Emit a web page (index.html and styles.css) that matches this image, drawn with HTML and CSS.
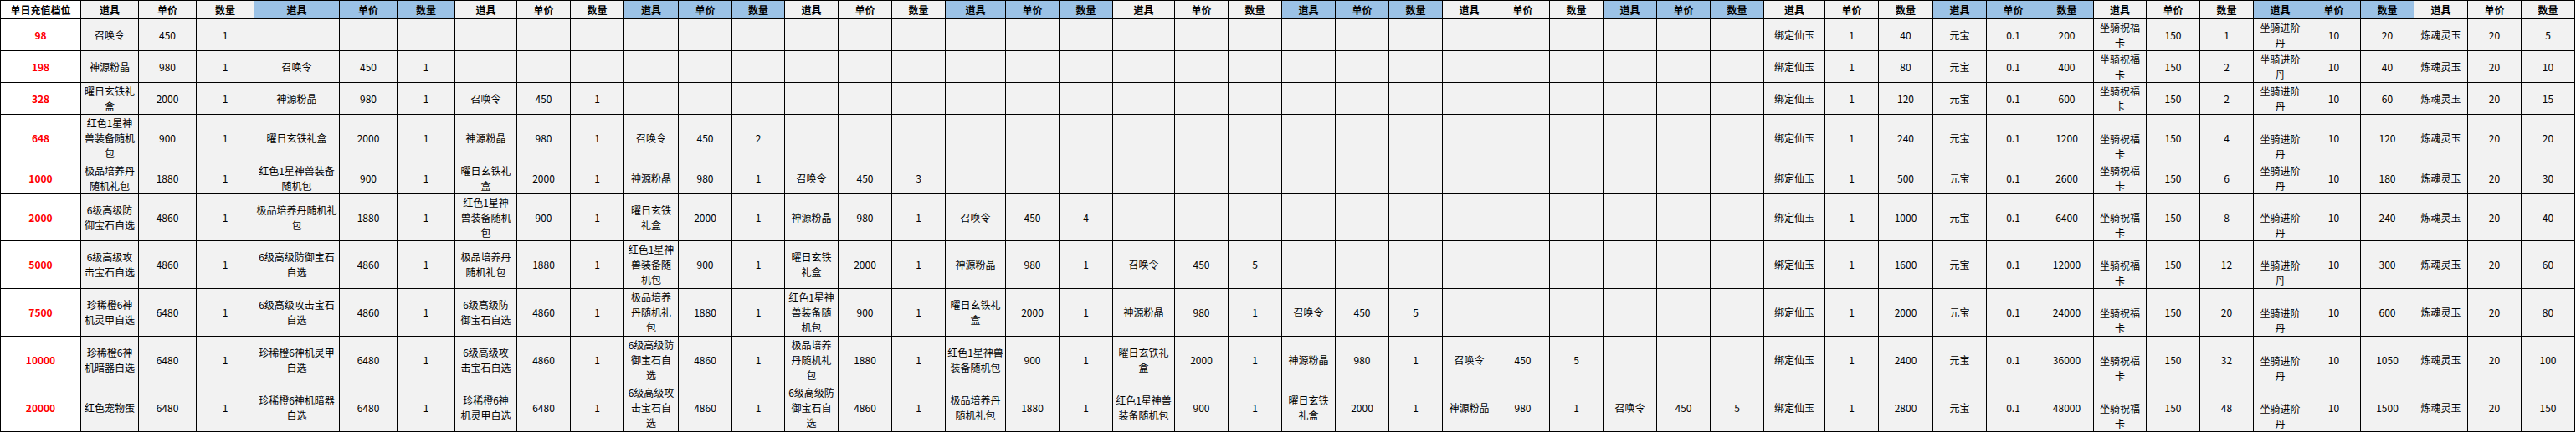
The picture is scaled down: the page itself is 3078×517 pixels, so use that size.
FILE: index.html
```html
<!DOCTYPE html>
<html lang="zh-CN">
<head>
<meta charset="utf-8">
<title>单日充值档位</title>
<link rel="stylesheet" href="styles.css">
</head>
<body>
<table class="sheet">
<colgroup>
<col class="c96">
<col class="c69"><col class="c69"><col class="c69">
<col class="c102"><col class="c69"><col class="c69">
<col class="c74"><col class="c64"><col class="c64">
<col class="c65"><col class="c64"><col class="c63">
<col class="c64"><col class="c64"><col class="c64">
<col class="c72"><col class="c64"><col class="c64">
<col class="c74"><col class="c64"><col class="c64">
<col class="c64"><col class="c64"><col class="c64">
<col class="c64"><col class="c64"><col class="c64">
<col class="c64"><col class="c64"><col class="c64">
<col class="c73"><col class="c64"><col class="c65">
<col class="c64"><col class="c64"><col class="c64">
<col class="c63"><col class="c64"><col class="c64">
<col class="c64"><col class="c64"><col class="c64">
<col class="c64"><col class="c64"><col class="c64">
</colgroup>
<thead>
<tr class="hd">
<th class="lv">单日充值档位</th>
<th>道具</th><th>单价</th><th>数量</th>
<th class="b">道具</th><th class="b">单价</th><th class="b">数量</th>
<th>道具</th><th>单价</th><th>数量</th>
<th class="b">道具</th><th class="b">单价</th><th class="b">数量</th>
<th>道具</th><th>单价</th><th>数量</th>
<th class="b">道具</th><th class="b">单价</th><th class="b">数量</th>
<th>道具</th><th>单价</th><th>数量</th>
<th class="b">道具</th><th class="b">单价</th><th class="b">数量</th>
<th>道具</th><th>单价</th><th>数量</th>
<th class="b">道具</th><th class="b">单价</th><th class="b">数量</th>
<th>道具</th><th>单价</th><th>数量</th>
<th class="b">道具</th><th class="b">单价</th><th class="b">数量</th>
<th>道具</th><th>单价</th><th>数量</th>
<th class="b">道具</th><th class="b">单价</th><th class="b">数量</th>
<th>道具</th><th>单价</th><th>数量</th>
</tr>
</thead>
<tbody>
<tr class="r2">
<td class="lv">98</td>
<td>召唤令</td><td>450</td><td>1</td>
<td></td><td></td><td></td>
<td></td><td></td><td></td>
<td></td><td></td><td></td>
<td></td><td></td><td></td>
<td></td><td></td><td></td>
<td></td><td></td><td></td>
<td></td><td></td><td></td>
<td></td><td></td><td></td>
<td></td><td></td><td></td>
<td>绑定仙玉</td><td>1</td><td>40</td>
<td>元宝</td><td>0.1</td><td>200</td>
<td class="bt">坐骑祝福<br>卡</td><td>150</td><td>1</td>
<td class="bt">坐骑进阶<br>丹</td><td>10</td><td>20</td>
<td>炼魂灵玉</td><td>20</td><td>5</td>
</tr>
<tr class="r2">
<td class="lv">198</td>
<td>神源粉晶</td><td>980</td><td>1</td>
<td>召唤令</td><td>450</td><td>1</td>
<td></td><td></td><td></td>
<td></td><td></td><td></td>
<td></td><td></td><td></td>
<td></td><td></td><td></td>
<td></td><td></td><td></td>
<td></td><td></td><td></td>
<td></td><td></td><td></td>
<td></td><td></td><td></td>
<td>绑定仙玉</td><td>1</td><td>80</td>
<td>元宝</td><td>0.1</td><td>400</td>
<td class="bt">坐骑祝福<br>卡</td><td>150</td><td>2</td>
<td class="bt">坐骑进阶<br>丹</td><td>10</td><td>40</td>
<td>炼魂灵玉</td><td>20</td><td>10</td>
</tr>
<tr class="r2">
<td class="lv">328</td>
<td>曜日玄铁礼<br>盒</td><td>2000</td><td>1</td>
<td>神源粉晶</td><td>980</td><td>1</td>
<td>召唤令</td><td>450</td><td>1</td>
<td></td><td></td><td></td>
<td></td><td></td><td></td>
<td></td><td></td><td></td>
<td></td><td></td><td></td>
<td></td><td></td><td></td>
<td></td><td></td><td></td>
<td></td><td></td><td></td>
<td>绑定仙玉</td><td>1</td><td>120</td>
<td>元宝</td><td>0.1</td><td>600</td>
<td class="bt">坐骑祝福<br>卡</td><td>150</td><td>2</td>
<td class="bt">坐骑进阶<br>丹</td><td>10</td><td>60</td>
<td>炼魂灵玉</td><td>20</td><td>15</td>
</tr>
<tr class="r3">
<td class="lv">648</td>
<td>红色1星神<br>兽装备随机<br>包</td><td>900</td><td>1</td>
<td>曜日玄铁礼盒</td><td>2000</td><td>1</td>
<td>神源粉晶</td><td>980</td><td>1</td>
<td>召唤令</td><td>450</td><td>2</td>
<td></td><td></td><td></td>
<td></td><td></td><td></td>
<td></td><td></td><td></td>
<td></td><td></td><td></td>
<td></td><td></td><td></td>
<td></td><td></td><td></td>
<td>绑定仙玉</td><td>1</td><td>240</td>
<td>元宝</td><td>0.1</td><td>1200</td>
<td class="bt">坐骑祝福<br>卡</td><td>150</td><td>4</td>
<td class="bt">坐骑进阶<br>丹</td><td>10</td><td>120</td>
<td>炼魂灵玉</td><td>20</td><td>20</td>
</tr>
<tr class="r2">
<td class="lv">1000</td>
<td>极品培养丹<br>随机礼包</td><td>1880</td><td>1</td>
<td>红色1星神兽装备<br>随机包</td><td>900</td><td>1</td>
<td>曜日玄铁礼<br>盒</td><td>2000</td><td>1</td>
<td>神源粉晶</td><td>980</td><td>1</td>
<td>召唤令</td><td>450</td><td>3</td>
<td></td><td></td><td></td>
<td></td><td></td><td></td>
<td></td><td></td><td></td>
<td></td><td></td><td></td>
<td></td><td></td><td></td>
<td>绑定仙玉</td><td>1</td><td>500</td>
<td>元宝</td><td>0.1</td><td>2600</td>
<td class="bt">坐骑祝福<br>卡</td><td>150</td><td>6</td>
<td class="bt">坐骑进阶<br>丹</td><td>10</td><td>180</td>
<td>炼魂灵玉</td><td>20</td><td>30</td>
</tr>
<tr class="r3b">
<td class="lv">2000</td>
<td>6级高级防<br>御宝石自选</td><td>4860</td><td>1</td>
<td>极品培养丹随机礼<br>包</td><td>1880</td><td>1</td>
<td>红色1星神<br>兽装备随机<br>包</td><td>900</td><td>1</td>
<td>曜日玄铁<br>礼盒</td><td>2000</td><td>1</td>
<td>神源粉晶</td><td>980</td><td>1</td>
<td>召唤令</td><td>450</td><td>4</td>
<td></td><td></td><td></td>
<td></td><td></td><td></td>
<td></td><td></td><td></td>
<td></td><td></td><td></td>
<td>绑定仙玉</td><td>1</td><td>1000</td>
<td>元宝</td><td>0.1</td><td>6400</td>
<td class="bt">坐骑祝福<br>卡</td><td>150</td><td>8</td>
<td class="bt">坐骑进阶<br>丹</td><td>10</td><td>240</td>
<td>炼魂灵玉</td><td>20</td><td>40</td>
</tr>
<tr class="r3">
<td class="lv">5000</td>
<td>6级高级攻<br>击宝石自选</td><td>4860</td><td>1</td>
<td>6级高级防御宝石<br>自选</td><td>4860</td><td>1</td>
<td>极品培养丹<br>随机礼包</td><td>1880</td><td>1</td>
<td>红色1星神<br>兽装备随<br>机包</td><td>900</td><td>1</td>
<td>曜日玄铁<br>礼盒</td><td>2000</td><td>1</td>
<td>神源粉晶</td><td>980</td><td>1</td>
<td>召唤令</td><td>450</td><td>5</td>
<td></td><td></td><td></td>
<td></td><td></td><td></td>
<td></td><td></td><td></td>
<td>绑定仙玉</td><td>1</td><td>1600</td>
<td>元宝</td><td>0.1</td><td>12000</td>
<td class="bt">坐骑祝福<br>卡</td><td>150</td><td>12</td>
<td class="bt">坐骑进阶<br>丹</td><td>10</td><td>300</td>
<td>炼魂灵玉</td><td>20</td><td>60</td>
</tr>
<tr class="r3">
<td class="lv">7500</td>
<td>珍稀橙6神<br>机灵甲自选</td><td>6480</td><td>1</td>
<td>6级高级攻击宝石<br>自选</td><td>4860</td><td>1</td>
<td>6级高级防<br>御宝石自选</td><td>4860</td><td>1</td>
<td>极品培养<br>丹随机礼<br>包</td><td>1880</td><td>1</td>
<td>红色1星神<br>兽装备随<br>机包</td><td>900</td><td>1</td>
<td>曜日玄铁礼<br>盒</td><td>2000</td><td>1</td>
<td>神源粉晶</td><td>980</td><td>1</td>
<td>召唤令</td><td>450</td><td>5</td>
<td></td><td></td><td></td>
<td></td><td></td><td></td>
<td>绑定仙玉</td><td>1</td><td>2000</td>
<td>元宝</td><td>0.1</td><td>24000</td>
<td class="bt">坐骑祝福<br>卡</td><td>150</td><td>20</td>
<td class="bt">坐骑进阶<br>丹</td><td>10</td><td>600</td>
<td>炼魂灵玉</td><td>20</td><td>80</td>
</tr>
<tr class="r3">
<td class="lv">10000</td>
<td>珍稀橙6神<br>机暗器自选</td><td>6480</td><td>1</td>
<td>珍稀橙6神机灵甲<br>自选</td><td>6480</td><td>1</td>
<td>6级高级攻<br>击宝石自选</td><td>4860</td><td>1</td>
<td>6级高级防<br>御宝石自<br>选</td><td>4860</td><td>1</td>
<td>极品培养<br>丹随机礼<br>包</td><td>1880</td><td>1</td>
<td>红色1星神兽<br>装备随机包</td><td>900</td><td>1</td>
<td>曜日玄铁礼<br>盒</td><td>2000</td><td>1</td>
<td>神源粉晶</td><td>980</td><td>1</td>
<td>召唤令</td><td>450</td><td>5</td>
<td></td><td></td><td></td>
<td>绑定仙玉</td><td>1</td><td>2400</td>
<td>元宝</td><td>0.1</td><td>36000</td>
<td class="bt">坐骑祝福<br>卡</td><td>150</td><td>32</td>
<td class="bt">坐骑进阶<br>丹</td><td>10</td><td>1050</td>
<td>炼魂灵玉</td><td>20</td><td>100</td>
</tr>
<tr class="r3">
<td class="lv">20000</td>
<td>红色宠物蛋</td><td>6480</td><td>1</td>
<td>珍稀橙6神机暗器<br>自选</td><td>6480</td><td>1</td>
<td>珍稀橙6神<br>机灵甲自选</td><td>6480</td><td>1</td>
<td>6级高级攻<br>击宝石自<br>选</td><td>4860</td><td>1</td>
<td>6级高级防<br>御宝石自<br>选</td><td>4860</td><td>1</td>
<td>极品培养丹<br>随机礼包</td><td>1880</td><td>1</td>
<td>红色1星神兽<br>装备随机包</td><td>900</td><td>1</td>
<td>曜日玄铁<br>礼盒</td><td>2000</td><td>1</td>
<td>神源粉晶</td><td>980</td><td>1</td>
<td>召唤令</td><td>450</td><td>5</td>
<td>绑定仙玉</td><td>1</td><td>2800</td>
<td>元宝</td><td>0.1</td><td>48000</td>
<td class="bt">坐骑祝福<br>卡</td><td>150</td><td>48</td>
<td class="bt">坐骑进阶<br>丹</td><td>10</td><td>1500</td>
<td>炼魂灵玉</td><td>20</td><td>150</td>
</tr>
</tbody>
</table>
</body>
</html>
```

FILE: styles.css
```css
html, body {
  margin: 0;
  padding: 0;
  background: #ffffff;
}

.sheet {
  border-collapse: collapse;
  table-layout: fixed;
  width: 3076px;
  font-family: "Noto Sans CJK SC", "Microsoft YaHei", sans-serif;
  font-size: 12px;
  color: #000000;
}

.sheet th,
.sheet td {
  border: 1px solid #000000;
  padding: 0 1px;
  text-align: center;
  vertical-align: middle;
  line-height: 18px;
  white-space: nowrap;
  background: #f2f2f2;
}

.sheet th {
  font-weight: bold;
}

.sheet th.b {
  background: #9bc2e6;
}

.sheet .lv {
  background: #ffffff;
}

.sheet td.lv {
  color: #ff0000;
  font-weight: bold;
}

.sheet td.bt {
  vertical-align: bottom;
  padding-bottom: 0;
}

.hd { height: 22px; }
.r2 { height: 38px; }
.r3 { height: 57px; }
.r3b { height: 56px; }

.c96 { width: 96px; }
.c102 { width: 102px; }
.c74 { width: 74px; }
.c73 { width: 73px; }
.c72 { width: 72px; }
.c69 { width: 69px; }
.c65 { width: 65px; }
.c64 { width: 64px; }
.c63 { width: 63px; }
```
